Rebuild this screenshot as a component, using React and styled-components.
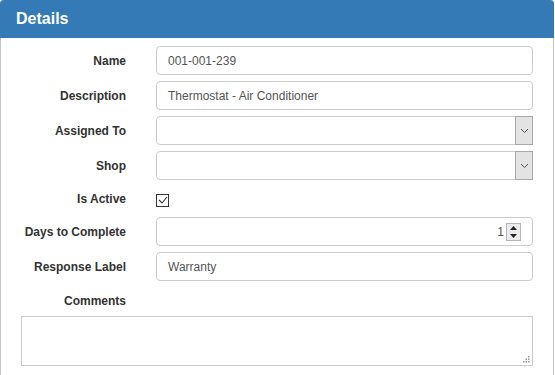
import { styled, createGlobalStyle } from 'styled-components';

const GlobalStyle = createGlobalStyle`
  body {
    margin: 0;
    background: #fff;
    font-family: "Liberation Sans", Arial, sans-serif;
  }
`;

const Panel = styled.div`
  width: 552px;
  border: 1px solid #c4c4c4;
  border-top: none;
  border-radius: 4px 4px 0 0;
  padding-bottom: 30px;
`;

const Header = styled.div`
  height: 38px;
  margin: 0 -1px;
  padding: 0 16px;
  display: flex;
  align-items: center;
  background: #337ab7;
  border-radius: 4px 4px 0 0;
  color: #fff;
  font-size: 16px;
  font-weight: bold;
`;

const Body = styled.div`
  padding: 8px 20px 0 0;
  display: flex;
  flex-direction: column;
  gap: 6px;
`;

const Row = styled.div`
  display: grid;
  grid-template-columns: 125px 1fr;
  column-gap: 30px;
  align-items: ${(p) => (p.$pt ? 'start' : 'center')};
  padding-top: ${(p) => p.$pt || 0}px;
  box-sizing: border-box;
  height: ${(p) => p.$h || 29}px;
`;

const Label = styled.label`
  text-align: right;
  font-size: 12px;
  font-weight: bold;
  color: #333;
`;

const Field = styled.div`
  position: relative;
  height: 29px;
  box-sizing: border-box;
  border: 1px solid #ccc;
  border-radius: 4px;
  padding: 0 11px;
  display: flex;
  align-items: center;
  justify-content: ${(p) => (p.$right ? 'flex-end' : 'flex-start')};
  font-size: 12px;
  color: #555;
  background: #fff;
`;

const SelectButton = styled.div`
  position: absolute;
  top: -1px;
  right: -1px;
  bottom: -1px;
  width: 16px;
  background: #e3e3e3;
  border: 1px solid #a9a9a9;
  display: flex;
  align-items: center;
  justify-content: center;
`;

const Spinner = styled.div`
  margin-left: 2px;
  width: 13px;
  height: 16px;
  border: 1px solid #b5b5b5;
  background: #ececec;
  display: flex;
  flex-direction: column;
  align-items: center;
  justify-content: space-around;
`;

const Check = styled.span`
  width: 11px;
  height: 11px;
  border: 1px solid #333;
  display: flex;
  align-items: center;
  justify-content: center;
  margin-top: 3px;
`;

const TextArea = styled.div`
  position: relative;
  margin-left: 20px;
  height: 50px;
  box-sizing: border-box;
  border: 1px solid #ccc;
`;

const Grip = styled.svg`
  position: absolute;
  right: 2px;
  bottom: 2px;
`;

const Chevron = () => (
  <svg width="9" height="6" viewBox="0 0 9 6">
    <path d="M1 1l3.5 3.5L8 1" fill="none" stroke="#555" strokeWidth="1" />
  </svg>
);

const SelectField = () => (
  <Field>
    <SelectButton>
      <Chevron />
    </SelectButton>
  </Field>
);

const fields = [
  { label: 'Name', value: '001-001-239' },
  { label: 'Description', value: 'Thermostat - Air Conditioner' },
  { label: 'Assigned To', select: true },
  { label: 'Shop', select: true },
];

const App = () => {
  return (
    <>
      <GlobalStyle />
      <Panel>
        <Header>Details</Header>
        <Body>
          {fields.map((f) => (
            <Row key={f.label}>
              <Label>{f.label}</Label>
              {f.select ? <SelectField /> : <Field>{f.value}</Field>}
            </Row>
          ))}
          <Row $h={25}>
            <Label>Is Active</Label>
            <Check>
              <svg width="10" height="8" viewBox="0 0 10 8">
                <path d="M1 4l3 3 5-6" fill="none" stroke="#333" strokeWidth="1.1" />
              </svg>
            </Check>
          </Row>
          <Row>
            <Label>Days to Complete</Label>
            <Field $right>
              1
              <Spinner>
                <svg width="7" height="4" viewBox="0 0 7 4">
                  <path d="M0 4h7L3.5 0z" fill="#222" />
                </svg>
                <svg width="7" height="4" viewBox="0 0 7 4">
                  <path d="M0 0h7L3.5 4z" fill="#222" />
                </svg>
              </Spinner>
            </Field>
          </Row>
          <Row>
            <Label>Response Label</Label>
            <Field>Warranty</Field>
          </Row>
          <Row $h={23} $pt={7}>
            <Label>Comments</Label>
          </Row>
          <TextArea>
            <Grip width="7" height="7" viewBox="0 0 7 7">
              <g fill="#999">
                <rect x="5" y="0" width="1.5" height="1.5" />
                <rect x="2.5" y="2.5" width="1.5" height="1.5" />
                <rect x="5" y="2.5" width="1.5" height="1.5" />
                <rect x="0" y="5" width="1.5" height="1.5" />
                <rect x="2.5" y="5" width="1.5" height="1.5" />
                <rect x="5" y="5" width="1.5" height="1.5" />
              </g>
            </Grip>
          </TextArea>
        </Body>
      </Panel>
    </>
  );
};

export default App;
